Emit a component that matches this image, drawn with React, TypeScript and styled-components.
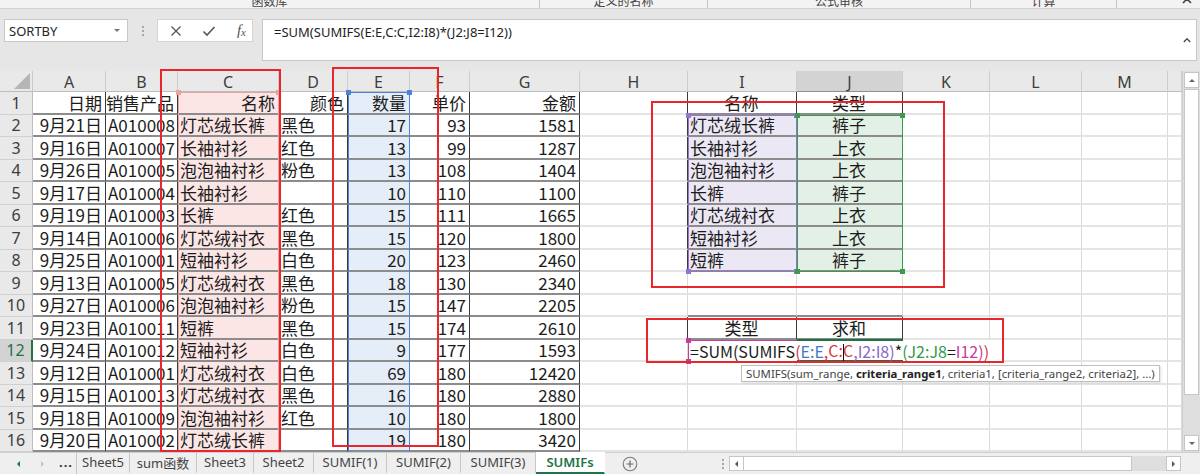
import React from 'react';
import styled, { createGlobalStyle } from 'styled-components';

// sheet geometry (px), col 0 is the row header, col 14 the cut-off N column
const COL_W = [33, 73, 72, 101, 69, 62, 60, 110, 108, 109, 106, 87, 92, 86, 14];
const COL_NAMES = ['A', 'B', 'C', 'D', 'E', 'F', 'G', 'H', 'I', 'J', 'K', 'L', 'M', ''];
const HEAD_H = 21;
const ROW_H = 22.5;
const ROWS = 16;
const GRID_TOP = 71;

const colLeft = (c: number) => COL_W.slice(0, c).reduce((a, b) => a + b, 0);
const rowTop = (r: number) => GRID_TOP + HEAD_H + (r - 1) * ROW_H;

const HEAD = ['日期', '销售产品', '名称', '颜色', '数量', '单价', '金额'];
const SALES = [
    ['9月21日', 'A010008', '灯芯绒长裤', '黑色', '17', '93', '1581'],
    ['9月16日', 'A010007', '长袖衬衫', '红色', '13', '99', '1287'],
    ['9月26日', 'A010005', '泡泡袖衬衫', '粉色', '13', '108', '1404'],
    ['9月17日', 'A010004', '长袖衬衫', '', '10', '110', '1100'],
    ['9月19日', 'A010003', '长裤', '红色', '15', '111', '1665'],
    ['9月14日', 'A010006', '灯芯绒衬衣', '黑色', '15', '120', '1800'],
    ['9月25日', 'A010001', '短袖衬衫', '白色', '20', '123', '2460'],
    ['9月13日', 'A010005', '灯芯绒衬衣', '黑色', '18', '130', '2340'],
    ['9月27日', 'A010006', '泡泡袖衬衫', '粉色', '15', '147', '2205'],
    ['9月23日', 'A010011', '短裤', '黑色', '15', '174', '2610'],
    ['9月24日', 'A010012', '短袖衬衫', '白色', '9', '177', '1593'],
    ['9月12日', 'A010001', '灯芯绒衬衣', '白色', '69', '180', '12420'],
    ['9月15日', 'A010013', '灯芯绒衬衣', '黑色', '16', '180', '2880'],
    ['9月18日', 'A010009', '泡泡袖衬衫', '红色', '10', '180', '1800'],
    ['9月20日', 'A010002', '灯芯绒长裤', '', '19', '180', '3420'],
];
const TYPES = [
    ['灯芯绒长裤', '裤子'], ['长袖衬衫', '上衣'], ['泡泡袖衬衫', '上衣'], ['长裤', '裤子'],
    ['灯芯绒衬衣', '上衣'], ['短袖衬衫', '上衣'], ['短裤', '裤子'],
];

type Align = 'left' | 'right' | 'center';
type CellSpec = { text: string; align: Align; fill?: string; rDark?: boolean; bDark?: boolean };

const DATA_ALIGN: Align[] = ['right', 'left', 'left', 'left', 'right', 'right', 'right'];

const FORMULA: Array<[string, string]> = [
    ['=SUM(SUMIFS', '#1b1b1b'],
    ['(', '#d9383a'],
    ['E:E', '#3f76d2'],
    [',', '#d9383a'],
    ['C:C', '#d9383a'],
    [',', '#8b66c9'],
    ['I2:I8', '#8b66c9'],
    [')', '#8b66c9'],
    ['*', '#1b1b1b'],
    ['(', '#2f9a47'],
    ['J2:J8', '#2f9a47'],
    ['=', '#1b1b1b'],
    ['I12', '#c2409b'],
    [')', '#c2409b'],
    [')', '#d9383a'],
];

const TABS = ['Sheet5', 'sum函数', 'Sheet3', 'Sheet2', 'SUMIF(1)', 'SUMIF(2)', 'SUMIF(3)', 'SUMIFs'];
const TAB_W = [53, 67, 57, 60, 73, 74, 75, 69];

const PINK = '#fbe5e5';
const BLUE = '#e5edf9';
const PURPLE = '#ece7f5';
const GREEN = '#e3f0e5';

const getCell = (r: number, c: number): CellSpec => {
    const spec: CellSpec = { text: '', align: 'left' };
    if (c >= 1 && c <= 7) {
        spec.text = r === 1 ? HEAD[c - 1] : SALES[r - 2][c - 1];
        spec.align = r === 1 ? 'right' : DATA_ALIGN[c - 1];
        spec.rDark = true;
        spec.bDark = true;
        if (c === 3) spec.fill = PINK;
        if (c === 5) spec.fill = BLUE;
    }
    const inTypes = r <= 8;
    if (c === 8 && (inTypes || r === 11)) spec.rDark = true;
    if (c === 9 || c === 10) {
        if (inTypes) {
            spec.text = r === 1 ? (c === 9 ? '名称' : '类型') : TYPES[r - 2][c - 9];
            spec.align = r === 1 || c === 10 ? 'center' : 'left';
            if (r > 1) spec.fill = c === 9 ? PURPLE : GREEN;
            spec.rDark = true;
            spec.bDark = true;
        }
        if (r === 10) spec.bDark = true;
        if (r === 11) {
            spec.text = c === 9 ? '类型' : '求和';
            spec.align = 'center';
            spec.rDark = true;
            spec.bDark = true;
        }
    }
    return spec;
};

const GlobalStyle = createGlobalStyle`
    html, body { margin: 0; padding: 0; background: #fff; }
    body { font-family: "Noto Sans", "Noto Sans CJK SC", sans-serif; }
`;

const Window = styled.div`
    position: relative;
    width: 1200px;
    height: 474px;
    overflow: hidden;
    display: flex;
    flex-direction: column;
    background: #e6e6e6;
`;

const Ribbon = styled.div`
    flex: none;
    height: 8px;
    display: flex;
    background: #f3f3f3;
    border-bottom: 1px solid #d2d2d2;
    overflow: hidden;
`;

const RibbonGroup = styled.div<{ $w: number; $sep?: boolean }>`
    flex: none;
    width: ${p => p.$w}px;
    box-sizing: border-box;
    border-right: ${p => (p.$sep ? '1px solid #c6c6c6' : 'none')};
    display: flex;
    justify-content: center;
    font: 12px/12px "Noto Sans CJK SC", sans-serif;
    color: #444;
    overflow: hidden;
`;

const RibbonLabel = styled.div`
    margin-top: -5px;
`;

const RibbonCollapse = styled.div`
    flex: 1;
    display: flex;
    justify-content: flex-end;
    padding-right: 8px;
    margin-top: -2px;
`;

const FormulaBar = styled.div`
    flex: none;
    height: 62px;
    box-sizing: border-box;
    padding: 10px 3px 0 4px;
    display: flex;
    align-items: flex-start;
`;

const NameBox = styled.div`
    flex: none;
    width: 124px;
    height: 23px;
    box-sizing: border-box;
    background: #fff;
    border: 1px solid #c8c8c8;
    display: flex;
    align-items: center;
    justify-content: space-between;
    padding: 0 7px 0 4px;
    font: 13px "Noto Sans", sans-serif;
    color: #262626;
`;

const DropArrow = styled.span`
    width: 0;
    height: 0;
    border-left: 3px solid transparent;
    border-right: 3px solid transparent;
    border-top: 3px solid #777;
`;

const Grip = styled.div`
    flex: none;
    width: 29px;
    height: 23px;
    display: flex;
    flex-direction: column;
    align-items: center;
    justify-content: center;
    gap: 2px;
`;

const GripDot = styled.span`
    width: 2px;
    height: 2px;
    background: #a6a6a6;
`;

const FxBox = styled.div`
    flex: none;
    width: 96px;
    height: 23px;
    box-sizing: border-box;
    background: #fff;
    border: 1px solid #d3d3d3;
    display: flex;
    align-items: center;
    justify-content: space-between;
    padding: 0 6px 0 12px;
    color: #555;
`;

const FxLabel = styled.span`
    font: italic 15px "Liberation Serif", serif;
    color: #555;
    sub {
        font-size: 11px;
        vertical-align: -1px;
    }
`;

const FormulaInput = styled.div`
    flex: 1;
    margin-left: 9px;
    height: 42px;
    box-sizing: border-box;
    background: #fff;
    border: 1px solid #c8c8c8;
    display: flex;
    justify-content: space-between;
    padding: 2px 5px 0 11px;
    font: 13px/20px "Noto Sans", sans-serif;
    color: #1e1e1e;
`;

const SheetArea = styled.div`
    flex: none;
    height: ${HEAD_H + ROWS * ROW_H}px;
    display: flex;
    background: #fff;
`;

const Grid = styled.div`
    flex: none;
    width: ${COL_W.reduce((a, b) => a + b, 0)}px;
    display: grid;
    grid-template-columns: ${COL_W.map(w => `${w}px`).join(' ')};
    grid-template-rows: ${HEAD_H}px repeat(${ROWS}, ${ROW_H}px);
    overflow: hidden;
`;

const Corner = styled.div`
    background: #e9e9e9;
    border-right: 1px solid #c9c9c9;
    border-bottom: 1px solid #bdbdbd;
    display: flex;
    align-items: flex-end;
    justify-content: flex-end;
    padding: 0 2px 2px 0;
`;

const CornerMark = styled.span`
    width: 16px;
    height: 16px;
    background: #b5b5b5;
    clip-path: polygon(100% 0, 100% 100%, 0 100%);
`;

const ColHead = styled.div<{ $active?: boolean }>`
    box-sizing: border-box;
    background: ${p => (p.$active ? '#d3d3d3' : '#e9e9e9')};
    border-right: 1px solid #cdcdcd;
    border-bottom: 1px solid ${p => (p.$active ? '#8f8f8f' : '#bdbdbd')};
    display: flex;
    align-items: center;
    justify-content: center;
    font: 16px "Noto Sans", sans-serif;
    color: #3d3d3d;
    padding-top: 1px;
`;

const RowHead = styled.div<{ $active?: boolean }>`
    box-sizing: border-box;
    background: ${p => (p.$active ? '#d3d3d3' : '#e9e9e9')};
    border-right: ${p => (p.$active ? '2px solid #217346' : '1px solid #bdbdbd')};
    border-bottom: 1px solid #d0d0d0;
    display: flex;
    align-items: center;
    justify-content: center;
    font: 16px "Noto Sans", sans-serif;
    color: ${p => (p.$active ? '#217346' : '#3d3d3d')};
`;

const Cell = styled.div<{ $align: Align; $fill?: string; $rDark?: boolean; $bDark?: boolean }>`
    box-sizing: border-box;
    min-width: 0;
    background: ${p => p.$fill ?? '#fff'};
    border-right: 1px solid ${p => (p.$rDark ? '#3a3a3a' : '#dadada')};
    border-bottom: 2px solid ${p => (p.$bDark ? '#8c8c8c' : '#e4e4e4')};
    display: flex;
    align-items: center;
    justify-content: ${p => (p.$align === 'left' ? 'flex-start' : p.$align === 'right' ? 'flex-end' : 'center')};
    padding: 1px 3px 0 2px;
    font: 17px/20px "Noto Sans CJK SC", sans-serif;
    color: #1c1c1c;
    white-space: nowrap;
    overflow: hidden;
`;

const VScroll = styled.div`
    flex: 1;
    box-sizing: border-box;
    background: #dedede;
    border-left: 1px solid #cfcfcf;
    padding: 1px;
    display: flex;
    flex-direction: column;
    gap: 1px;
`;

const ScrollButton = styled.div`
    flex: none;
    height: 14px;
    background: #fff;
    border: 1px solid #c6c6c6;
    display: flex;
    align-items: center;
    justify-content: center;
`;

const VThumb = styled.div`
    flex: none;
    height: 306px;
    box-sizing: border-box;
    background: #fff;
    border: 1px solid #c6c6c6;
`;

const Spacer = styled.div`
    flex: 1;
`;

const Tri = styled.span<{ $dir: 'up' | 'down' | 'left' | 'right'; $color?: string; $size?: number }>`
    width: 0;
    height: 0;
    border: ${p => p.$size ?? 3}px solid transparent;
    ${p => `border-${{ up: 'bottom', down: 'top', left: 'right', right: 'left' }[p.$dir]}-color: ${p.$color ?? '#666'};`}
    ${p => (p.$dir === 'up' ? 'margin-top: -3px;' : p.$dir === 'down' ? 'margin-top: 3px;' : p.$dir === 'left' ? 'margin-left: -3px;' : 'margin-left: 3px;')}
`;

const TabBar = styled.div`
    flex: none;
    height: 22px;
    box-sizing: border-box;
    display: flex;
    align-items: stretch;
    background: #efefef;
    border-top: 1px solid #cfcfcf;
    font: 13px "Noto Sans", "Noto Sans CJK SC", sans-serif;
    color: #444;
`;

const TabNav = styled.div`
    flex: none;
    width: 77px;
    box-sizing: border-box;
    display: flex;
    align-items: center;
    padding-left: 17px;
    gap: 18px;
    border-right: 1px solid #c8c8c8;
`;

const Ellipsis = styled.span`
    font-weight: 700;
    letter-spacing: 1px;
    color: #333;
    margin-left: -6px;
    margin-bottom: 3px;
`;

const Tab = styled.div<{ $w: number; $active?: boolean }>`
    flex: none;
    width: ${p => p.$w}px;
    box-sizing: border-box;
    display: flex;
    align-items: center;
    justify-content: center;
    border-right: 1px solid ${p => (p.$active ? 'transparent' : '#c8c8c8')};
    background: ${p => (p.$active ? '#fff' : 'transparent')};
    color: ${p => (p.$active ? '#217346' : '#444')};
    font-weight: ${p => (p.$active ? 600 : 400)};
    border-bottom: 2px solid ${p => (p.$active ? '#217346' : 'transparent')};
    margin-top: -1px;
`;

const AddSheet = styled.div`
    flex: none;
    width: 112px;
    display: flex;
    align-items: center;
    padding-left: 17px;
    box-sizing: border-box;
`;

const BarGrip = styled.div`
    flex: none;
    width: 12px;
    display: flex;
    flex-direction: column;
    align-items: center;
    justify-content: center;
    gap: 2px;
`;

const HScroll = styled.div`
    flex: none;
    width: 452px;
    display: flex;
    align-items: center;
    padding: 2px 0;
    box-sizing: border-box;
`;

const HButton = styled.div`
    flex: none;
    width: 15px;
    height: 15px;
    box-sizing: border-box;
    background: #fff;
    border: 1px solid #c6c6c6;
    display: flex;
    align-items: center;
    justify-content: center;
`;

const HThumb = styled.div`
    flex: none;
    width: 388px;
    height: 15px;
    box-sizing: border-box;
    background: #fff;
    border: 1px solid #c6c6c6;
    border-left: none;
`;

const HTrack = styled.div`
    flex: 1;
    height: 15px;
    background: #dedede;
`;

// overlays: range highlights, in-cell editor, tooltip and the red markup boxes
const RangeBox = styled.div<{ $color: string; $w?: number; $open?: boolean; $flat?: boolean }>`
    position: absolute;
    box-sizing: border-box;
    border: ${p => p.$w ?? 1}px solid ${p => p.$color};
    ${p => (p.$open ? 'border-bottom: none;' : '')}
    ${p => (p.$flat ? 'border-left: none; border-right: none;' : '')}
`;

const Handle = styled.span<{ $color: string; $x: 'l' | 'r'; $y: 't' | 'b' }>`
    position: absolute;
    width: 5px;
    height: 5px;
    background: ${p => p.$color};
    ${p => (p.$x === 'l' ? 'left: -3px;' : 'right: -3px;')}
    ${p => (p.$y === 't' ? 'top: -3px;' : 'bottom: -3px;')}
`;

const EditorPane = styled.div`
    position: absolute;
    background: #fff;
`;

const EditorText = styled.div`
    position: absolute;
    box-sizing: border-box;
    display: flex;
    align-items: center;
    padding: 1px 0 0 2px;
    font: 16px/20px "Noto Sans CJK SC", sans-serif;
    white-space: nowrap;
`;

const Caret = styled.span`
    display: inline-block;
    width: 1px;
    height: 18px;
    background: #111;
    margin-right: -1px;
    vertical-align: middle;
`;

const Tooltip = styled.div`
    position: absolute;
    box-sizing: border-box;
    height: 17px;
    background: #fff;
    border: 1px solid #bfbfbf;
    box-shadow: 1px 1px 2px rgba(0, 0, 0, 0.12);
    padding: 0 4px;
    display: flex;
    align-items: center;
    font: 11.4px "Noto Sans", sans-serif;
    color: #444;
    white-space: nowrap;
    b {
        color: #222;
        font-weight: 700;
    }
`;

const Markup = styled.div`
    position: absolute;
    box-sizing: border-box;
    border: 2px solid #e8262c;
`;

const Chevron = ({ size = 9 }: { size?: number }) => (
    <svg width={size} height={size * 0.6} viewBox="0 0 10 6">
        <path d="M1 5 L5 1 L9 5" fill="none" stroke="#444" strokeWidth="1.6" />
    </svg>
);

const box = (l: number, t: number, r: number, b: number): React.CSSProperties => ({ left: l, top: t, width: r - l, height: b - t });

type RangeProps = {
    l: number; t: number; r: number; b: number; color: string;
    w?: number; open?: boolean; flat?: boolean; handles?: Array<['l' | 'r', 't' | 'b']>;
};
const Range = ({ l, t, r, b, color, w, open, flat, handles = [] }: RangeProps) => (
    <RangeBox $color={color} $w={w} $open={open} $flat={flat} style={box(l, t, r, b)}>
        {handles.map(([x, y]) => <Handle key={x + y} $color={color} $x={x} $y={y} />)}
    </RangeBox>
);

export default function App() {
    const gridBottom = GRID_TOP + HEAD_H + ROWS * ROW_H;
    const editBox = box(colLeft(9), rowTop(12), 1003, rowTop(13));

    return (
        <Window>
            <GlobalStyle />
            <Ribbon>
                <RibbonGroup $w={540} $sep><RibbonLabel>函数库</RibbonLabel></RibbonGroup>
                <RibbonGroup $w={168} $sep><RibbonLabel>定义的名称</RibbonLabel></RibbonGroup>
                <RibbonGroup $w={263} $sep><RibbonLabel>公式审核</RibbonLabel></RibbonGroup>
                <RibbonGroup $w={146} $sep><RibbonLabel>计算</RibbonLabel></RibbonGroup>
                <RibbonCollapse><Chevron size={10} /></RibbonCollapse>
            </Ribbon>

            <FormulaBar>
                <NameBox>SORTBY<DropArrow /></NameBox>
                <Grip><GripDot /><GripDot /><GripDot /></Grip>
                <FxBox>
                    <svg width="12" height="12" viewBox="0 0 12 12">
                        <path d="M1.5 1.5 L10.5 10.5 M10.5 1.5 L1.5 10.5" stroke="#555" strokeWidth="1.3" />
                    </svg>
                    <svg width="14" height="12" viewBox="0 0 14 12">
                        <path d="M1.5 6.5 L5 10 L12.5 2" fill="none" stroke="#555" strokeWidth="1.6" />
                    </svg>
                    <FxLabel>f<sub>x</sub></FxLabel>
                </FxBox>
                <FormulaInput>
                    <span>=SUM(SUMIFS(E:E,C:C,I2:I8)*(J2:J8=I12))</span>
                    <span style={{ marginTop: 6 }}><Chevron size={8} /></span>
                </FormulaInput>
            </FormulaBar>

            <SheetArea>
                <Grid>
                    <Corner><CornerMark /></Corner>
                    {COL_NAMES.map((n, i) => <ColHead key={`h${i}`} $active={n === 'J'}>{n}</ColHead>)}
                    {Array.from({ length: ROWS }, (_, i) => i + 1).map(r => (
                        <React.Fragment key={r}>
                            <RowHead $active={r === 12}>{r}</RowHead>
                            {COL_W.slice(1).map((_, ci) => {
                                const spec = getCell(r, ci + 1);
                                return (
                                    <Cell key={ci} $align={spec.align} $fill={spec.fill} $rDark={spec.rDark} $bDark={spec.bDark}>
                                        {spec.text}
                                    </Cell>
                                );
                            })}
                        </React.Fragment>
                    ))}
                </Grid>
                <VScroll>
                    <ScrollButton><Tri $dir="up" /></ScrollButton>
                    <VThumb />
                    <Spacer />
                    <ScrollButton><Tri $dir="down" /></ScrollButton>
                </VScroll>
            </SheetArea>

            <TabBar>
                <TabNav>
                    <Tri $dir="left" $color="#217346" $size={3} />
                    <Tri $dir="right" $color="#c4c4c4" $size={3} />
                    <Ellipsis>...</Ellipsis>
                </TabNav>
                {TABS.map((t, i) => (
                    <Tab key={t} $w={TAB_W[i]} $active={t === 'SUMIFs'}>{t}</Tab>
                ))}
                <AddSheet>
                    <svg width="16" height="16" viewBox="0 0 16 16">
                        <circle cx="8" cy="8" r="6.8" fill="none" stroke="#7a7a7a" strokeWidth="1.1" />
                        <path d="M8 4.5 V11.5 M4.5 8 H11.5" stroke="#6a6a6a" strokeWidth="1.2" />
                    </svg>
                </AddSheet>
                <BarGrip><GripDot /><GripDot /><GripDot /></BarGrip>
                <HScroll>
                    <HButton><Tri $dir="left" $color="#555" /></HButton>
                    <HThumb />
                    <HTrack />
                    <HButton><Tri $dir="right" $color="#555" /></HButton>
                </HScroll>
            </TabBar>

            {/* reference highlights of the formula being edited */}
            <Range l={colLeft(3)} t={rowTop(1)} r={colLeft(4)} b={gridBottom} color="#e8a2a2" open handles={[['l', 't'], ['r', 't']]} />
            <Range l={colLeft(5)} t={rowTop(1)} r={colLeft(6)} b={gridBottom} color="#4d82d6" open handles={[['l', 't'], ['r', 't']]} />
            <Range l={colLeft(9)} t={rowTop(2)} r={colLeft(10)} b={rowTop(9)} color="#9474cc" handles={[['l', 't'], ['r', 't'], ['l', 'b'], ['r', 'b']]} />
            <Range l={colLeft(10)} t={rowTop(2)} r={colLeft(11)} b={rowTop(9)} color="#3d9a4c" handles={[['l', 't'], ['r', 't'], ['l', 'b'], ['r', 'b']]} />

            {/* in-cell editor of J12: white pane, cell edges, then the coloured text */}
            <EditorPane style={editBox} />
            <Range l={colLeft(9)} t={rowTop(12)} r={colLeft(10) + 1} b={rowTop(13)} color="#c2409b" handles={[['l', 't'], ['l', 'b']]} />
            <Range l={colLeft(10)} t={rowTop(12) - 1} r={colLeft(11)} b={rowTop(13)} color="#1f7244" w={2} flat />
            <EditorPane style={box(colLeft(10), rowTop(12) + 1, colLeft(10) + 2, rowTop(13) - 2)} />
            <EditorText style={editBox}>
                {FORMULA.map(([txt, color], i) => (
                    txt === 'C:C'
                        ? <span key={i} style={{ color }}>C:<Caret />C</span>
                        : <span key={i} style={{ color }}>{txt}</span>
                ))}
            </EditorText>

            <Tooltip style={{ left: 741, top: 365 }}>
                SUMIFS(sum_range,&nbsp;<b>criteria_range1</b>, criteria1, [criteria_range2, criteria2], ...)
            </Tooltip>

            {/* red markup drawn on the screenshot */}
            <Markup style={box(160, 69, 281, 452)} />
            <Markup style={box(332, 67, 439, 447)} />
            <Markup style={box(651, 101, 945, 288)} />
            <Markup style={box(646, 318, 1004, 363)} />
        </Window>
    );
}
